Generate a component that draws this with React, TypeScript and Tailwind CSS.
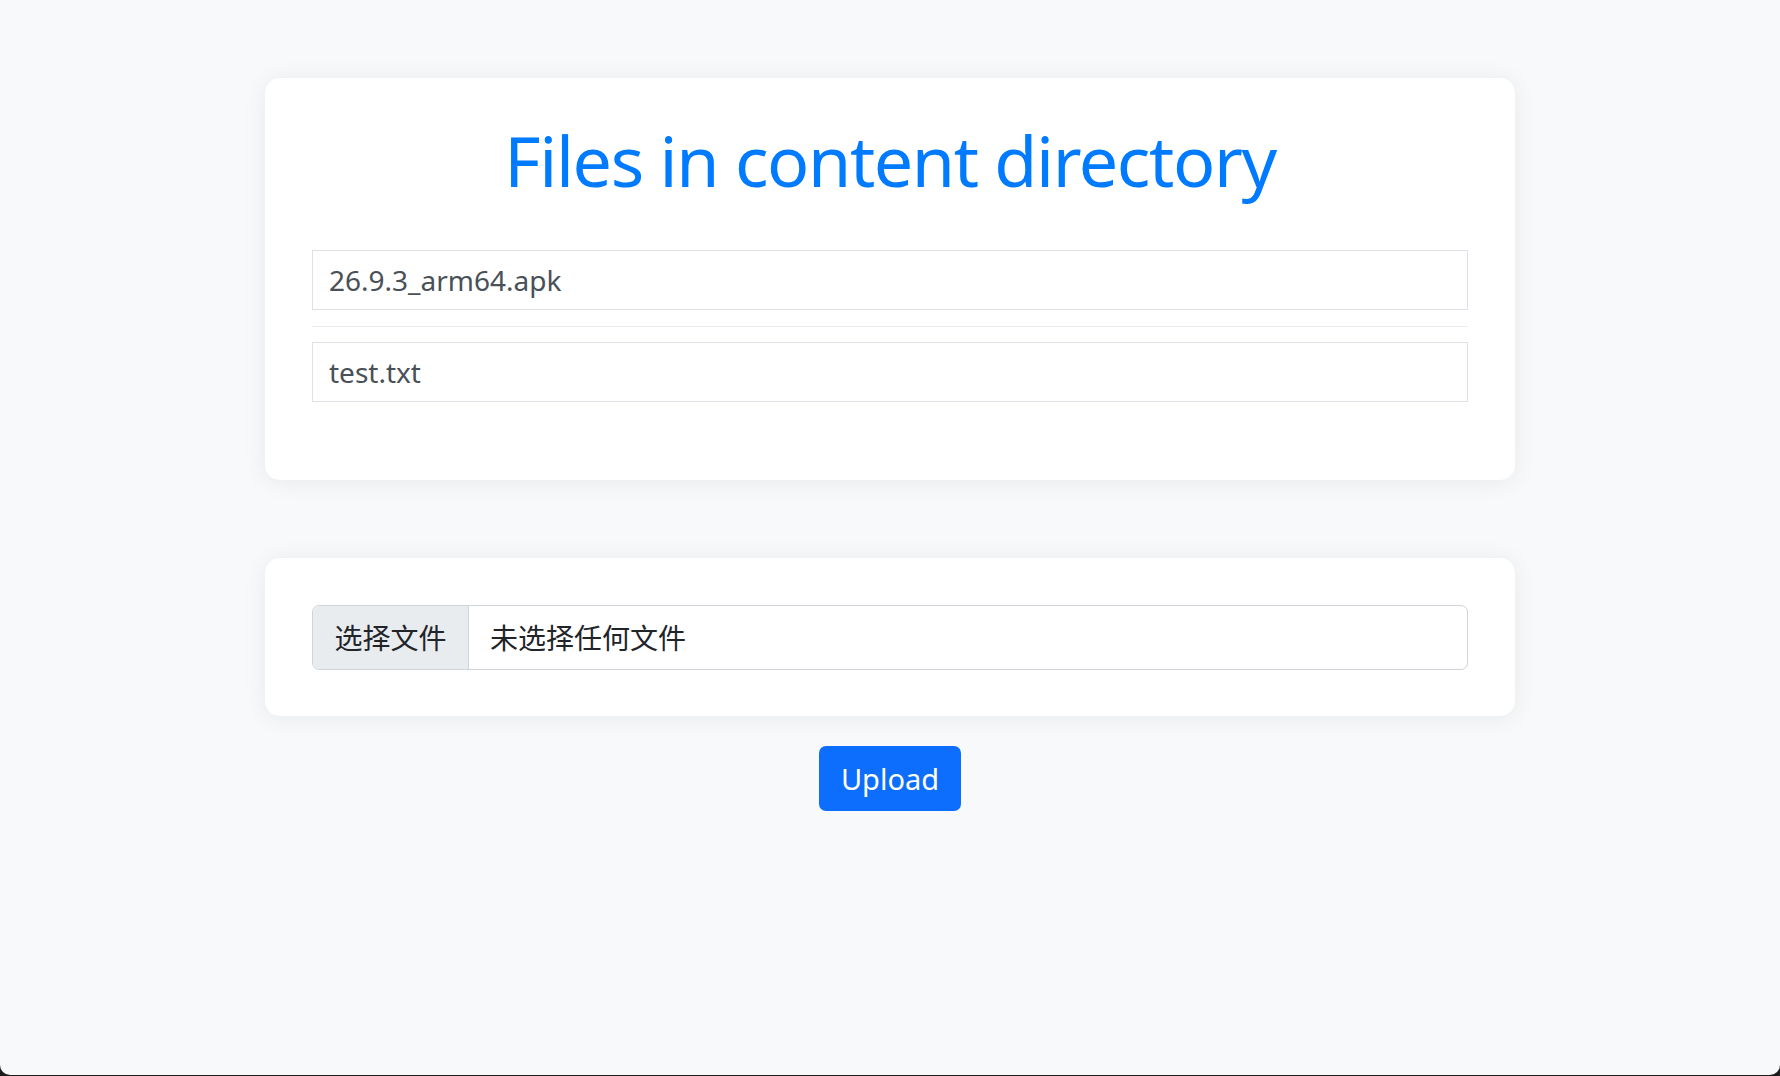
export default function App() {
  const files = ['26.9.3_arm64.apk', 'test.txt'];

  return (
    <div className="h-screen flex flex-col bg-[#1c1c1c]" style={{ fontFamily: '"Noto Sans", "Noto Sans CJK SC", sans-serif' }}>
      <div className="flex-1 mb-px bg-[#f8f9fa] rounded-b-[10px] pt-[78px]">
        <div className="w-[1250px] mx-auto">
          {/* file list */}
          <div className="bg-white rounded-[15px] shadow-[0_2px_24px_rgba(0,0,0,0.07)] px-[47px] pt-[47px] pb-[78px]">
            <h1 className="text-[70px] leading-none text-center text-[#007bff] mb-[55px] tracking-[-1.4px]">
              Files in content directory
            </h1>
            <div>
              {files.map((f, i) => (
                <div key={f}>
                  {i > 0 && <hr className="border-t border-[#e9ecef] mt-[16px] mb-[15px]" />}
                  <div className="h-[60px] border border-[#dee2e6] flex items-center px-[16px] text-[28px] text-[#495057]">
                    {f}
                  </div>
                </div>
              ))}
            </div>
          </div>

          {/* upload form */}
          <div className="mt-[78px] bg-white rounded-[15px] shadow-[0_2px_24px_rgba(0,0,0,0.07)] px-[47px] pt-[47px] pb-[46px]">
            <div className="h-[65px] flex border border-[#ced4da] rounded-[7px] overflow-hidden text-[28px] text-[#212529]">
              <div className="w-[156px] shrink-0 bg-[#e9ecef] border-r border-[#ced4da] flex items-center justify-center">
                选择文件
              </div>
              <div className="flex items-center pl-[21px]">未选择任何文件</div>
            </div>
          </div>

          <div className="flex justify-center mt-[30px]">
            <button className="w-[142px] h-[65px] rounded-[7px] bg-[#0d6efd] text-white text-[29px]">
              Upload
            </button>
          </div>
        </div>
      </div>
    </div>
  );
}
